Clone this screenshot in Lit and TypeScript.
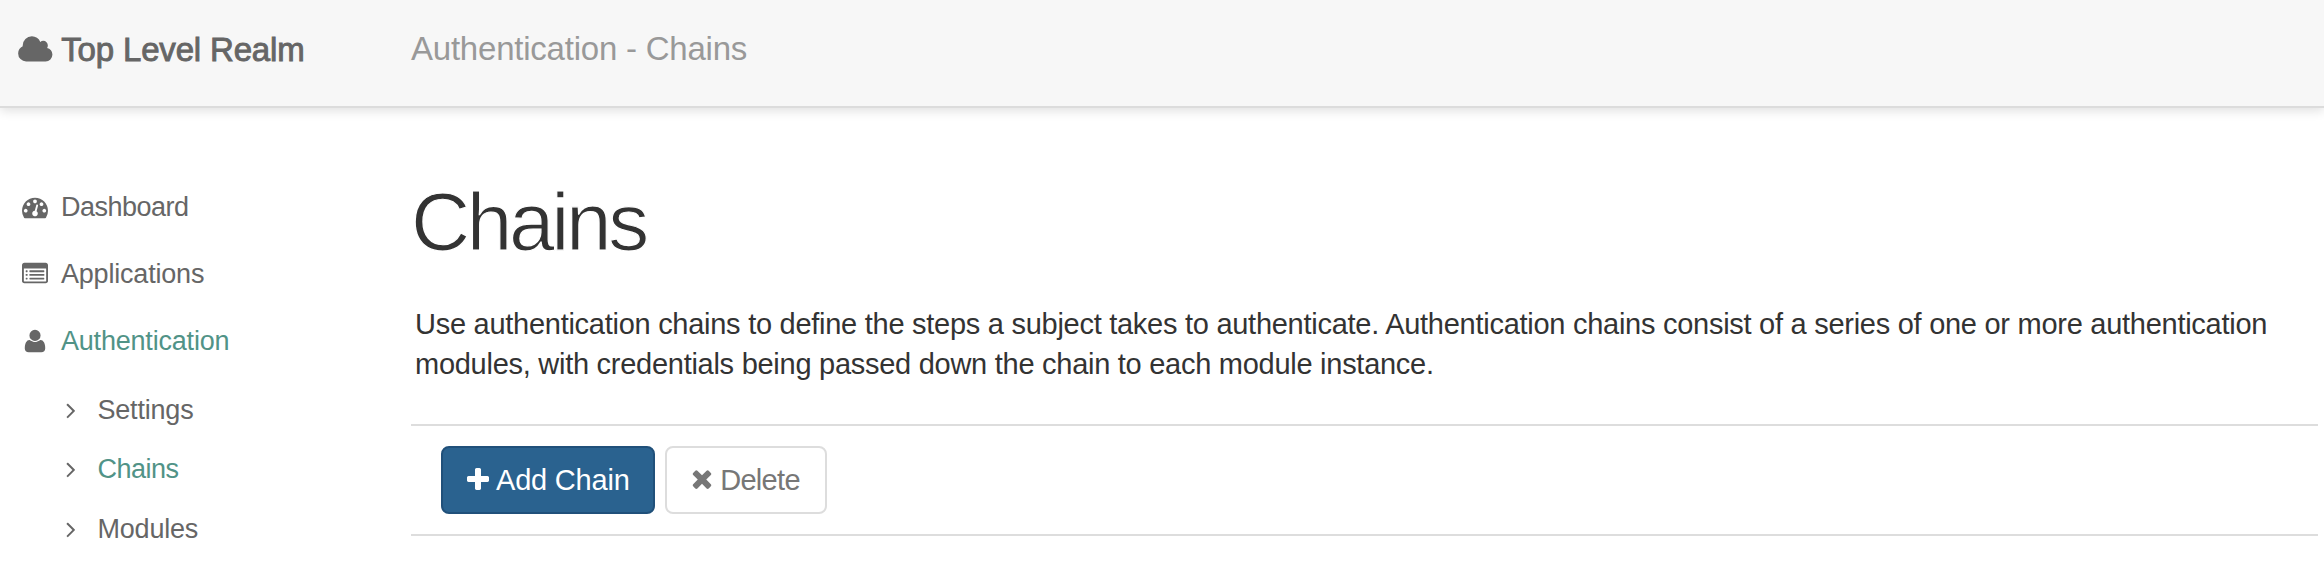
import { LitElement, html, css, svg } from "lit";
import { customElement } from "lit/decorators.js";

const cloud = svg`<path d="M1984 1152q0 159-112.5 271.5t-271.5 112.5h-1088q-185 0-316.5-131.5t-131.5-316.5q0-132 71-241.5t187-163.5q-2-28-2-43 0-212 150-362t362-150q158 0 286.5 88t187.5 230q70-62 166-62 106 0 181 75t75 181q0 75-41 138 129 30 213 134.5t84 239.5z"/>`;
const gauge = svg`<path d="M384 1152q0-53-37.5-90.5t-90.5-37.5-90.5 37.5-37.5 90.5 37.5 90.5 90.5 37.5 90.5-37.5 37.5-90.5zm192-448q0-53-37.5-90.5t-90.5-37.5-90.5 37.5-37.5 90.5 37.5 90.5 90.5 37.5 90.5-37.5 37.5-90.5zm428 481l101-382q6-26-7.5-48.5t-38.5-29.5-48 6.5-30 39.5l-101 382q-60 5-107 43.5t-63 98.5q-20 77 20 146t117 89 146-20 89-117q16-60-6-117t-72-91zm660-33q0-53-37.5-90.5t-90.5-37.5-90.5 37.5-37.5 90.5 37.5 90.5 90.5 37.5 90.5-37.5 37.5-90.5zm-640-640q0-53-37.5-90.5t-90.5-37.5-90.5 37.5-37.5 90.5 37.5 90.5 90.5 37.5 90.5-37.5 37.5-90.5zm448 192q0-53-37.5-90.5t-90.5-37.5-90.5 37.5-37.5 90.5 37.5 90.5 90.5 37.5 90.5-37.5 37.5-90.5zm320 448q0 261-141 483-19 29-54 29h-1402q-35 0-54-29-141-221-141-483 0-182 71-348t191-286 286-191 348-71 348 71 286 191 191 286 71 348z"/>`;
const listAlt = svg`<path fill-rule="evenodd" d="M160 128h1472q66 0 113 47t47 113v1088q0 66-47 113t-113 47h-1472q-66 0-113-47t-47-113v-1088q0-66 47-113t113-47zM160 512q-13 0-22.500 9.500t-9.500 22.500v832q0 13 9.500 22.500t22.500 9.500h1472q13 0 22.500-9.500t9.500-22.500v-832q0-13-9.500-22.500t-22.500-9.500z"/>
  <rect x="256" y="640" width="128" height="128" rx="32"/><rect x="256" y="896" width="128" height="128" rx="32"/><rect x="256" y="1152" width="128" height="128" rx="32"/>
  <rect x="512" y="640" width="1024" height="128" rx="32"/><rect x="512" y="896" width="1024" height="128" rx="32"/><rect x="512" y="1152" width="1024" height="128" rx="32"/>`;
const user = svg`<path d="M1600 1405q0 120-73 189.5t-194 69.5h-874q-121 0-194-69.5t-73-189.5q0-53 3.5-103.5t14-109 26.5-108.5 43-97.5 62-81 85.5-53.5 111.5-20q9 0 42 21.5t74.5 48 108 48 133.5 21.5 133.5-21.5 108-48 74.5-48 42-21.5q61 0 111.5 20t85.5 53.5 62 81 43 97.5 26.5 108.5 14 109 3.5 103.5zm-320-893q0 159-112.5 271.5t-271.5 112.5-271.5-112.5-112.5-271.5 112.5-271.5 271.5-112.5 271.5 112.5 112.5 271.5z"/>`;
const angle = svg`<path d="M1171 960q0 13-10 23l-466 466q-10 10-23 10t-23-10l-50-50q-10-10-10-23t10-23l393-393-393-393q-10-10-10-23t10-23l50-50q10-10 23-10t23 10l466 466q10 10 10 23z"/>`;
const plus = svg`<path d="M1600 736v192q0 40-28 68t-68 28h-416v416q0 40-28 68t-68 28h-192q-40 0-68-28t-28-68v-416h-416q-40 0-68-28t-28-68v-192q0-40 28-68t68-28h416v-416q0-40 28-68t68-28h192q40 0 68 28t28 68v416h416q40 0 68 28t28 68z"/>`;
const times = svg`<path d="M1490 1322q0 40-28 68l-136 136q-28 28-68 28t-68-28l-294-294-294 294q-28 28-68 28t-68-28l-136-136q-28-28-28-68t28-68l294-294-294-294q-28-28-28-68t28-68l136-136q28-28 68-28t68 28l294 294 294-294q28-28 68-28t68 28l136 136q28 28 28 68t-28 68l-294 294 294 294q28 28 28 68z"/>`;

const nav = [
  { label: "Dashboard", icon: gauge, cls: "tight" },
  { label: "Applications", icon: listAlt, cls: "" },
  { label: "Authentication", icon: user, cls: "active" },
];
const sub = [
  { label: "Settings", cls: "" },
  { label: "Chains", cls: "active tight" },
  { label: "Modules", cls: "" },
];

@customElement("app-root")
export class AppRoot extends LitElement {
  static styles = css`
    :host {
      display: block;
      height: 570px;
      overflow: hidden;
      background: #fff;
      color: #333;
      font-family: "Liberation Sans", Arial, sans-serif;
      box-sizing: border-box;
    }
    * { box-sizing: border-box; }
    svg { display: block; flex: none; fill: currentColor; }
    .header {
      display: grid;
      grid-template-columns: 411px 1fr;
      height: 108px;
      background: #f7f7f7;
      border-bottom: 2px solid #dcdcdc;
      box-shadow: 0 3px 10px rgba(0, 0, 0, 0.12);
      font-size: 33px;
      line-height: 38px;
    }
    .realm {
      display: flex;
      align-items: flex-start;
      padding: 30.6px 0 0 16.9px;
      color: #666;
    }
    .realm svg { margin-top: 3px; }
    .realm span { margin-left: 7.8px; -webkit-text-stroke: 0.9px currentColor; letter-spacing: -0.17px; }
    .crumb { padding-top: 30px; color: #999; letter-spacing: -0.22px; }
    .body { display: grid; grid-template-columns: 411px 1907px; }
    .side { padding-top: 65px; color: #666; font-size: 27px; letter-spacing: -0.2px; }
    .item { display: flex; align-items: center; height: 67px; padding-left: 22px; gap: 13px; }
    .item span { padding-top: 1.6px; }
    .subs { padding-top: 6px; }
    .sub { display: flex; align-items: center; height: 59.67px; padding-left: 57.5px; gap: 14px; }
    .sub span { padding-top: 1px; }
    .active span { color: #519387; }
    .tight span { letter-spacing: -0.5px; }
    h1 {
      margin: 0;
      padding-top: 67px;
      height: 196px;
      font-size: 82px;
      line-height: 94px;
      font-weight: 400;
      letter-spacing: -3.4px;
      -webkit-text-stroke: 1.2px #fff;
    }
    p { margin: 0 0 40px; padding-left: 4px; font-size: 29px; line-height: 40px; letter-spacing: -0.27px; white-space: nowrap; }
    .bar {
      display: flex;
      gap: 10px;
      height: 112px;
      padding: 20px 0 0 30px;
      border-top: 2px solid #ddd;
      border-bottom: 2px solid #ddd;
    }
    .btn {
      display: flex;
      align-items: center;
      height: 68px;
      border: 2px solid #ddd;
      border-radius: 8px;
      font: 29px/40px "Liberation Sans", Arial, sans-serif;
      letter-spacing: -0.2px;
      background: #fff;
      color: #777;
      padding: 0;
      white-space: nowrap;
    }
    .primary { width: 214px; background: #2a628f; border-color: #20507a; color: #fff; padding-left: 21px; }
    .primary svg { margin-right: 4px; }
    .delete { width: 162px; padding-left: 20.6px; }
    .delete svg { margin-right: 4.6px; }
    .delete span { letter-spacing: -0.7px; }
  `;

  private icon(shape: unknown, size: number, box = "0 0 1792 1792", width = size) {
    return html`<svg width=${width} height=${size} viewBox=${box}>${shape}</svg>`;
  }

  render() {
    return html`
      <div class="header">
        <div class="realm">${this.icon(cloud, 32, "0 0 2048 1792", 36.57)}<span>Top Level Realm</span></div>
        <div class="crumb">Authentication - Chains</div>
      </div>
      <div class="body">
        <nav class="side">
          ${nav.map((n) => html`<div class="item ${n.cls}">${this.icon(n.icon, 26)}<span>${n.label}</span></div>`)}
          <div class="subs">
            ${sub.map((n) => html`<div class="sub ${n.cls}">${this.icon(angle, 26)}<span>${n.label}</span></div>`)}
          </div>
        </nav>
        <main>
          <h1>Chains</h1>
          <p>Use authentication chains to define the steps a subject takes to authenticate. Authentication chains consist of a series of one or more authentication<br />modules, with credentials being passed down the chain to each module instance.</p>
          <div class="bar">
            <button class="btn primary">${this.icon(plus, 28)}<span>Add Chain</span></button>
            <button class="btn delete">${this.icon(times, 28, "0 90 1792 1792")}<span>Delete</span></button>
          </div>
        </main>
      </div>
    `;
  }
}
